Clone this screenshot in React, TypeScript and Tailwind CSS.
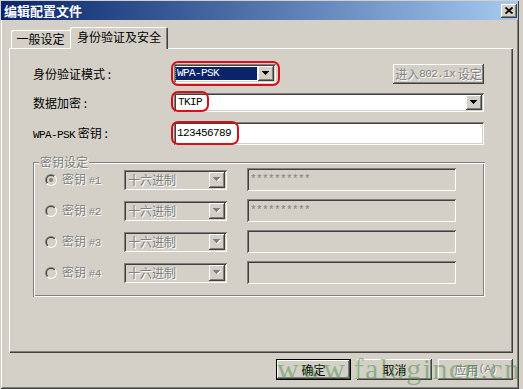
import React from "react";

// classic 3D edges, drawn with inset shadows so they take no layout room
const SUNKEN =
  "shadow-[inset_1px_1px_#808080,inset_-1px_-1px_#ffffff,inset_2px_2px_#404040,inset_-2px_-2px_#d4d0c8]";
const RAISED =
  "shadow-[inset_-1px_-1px_#404040,inset_1px_1px_#ffffff,inset_-2px_-2px_#808080,inset_2px_2px_#d4d0c8]";
const DEFAULT_BTN =
  "shadow-[inset_0_0_0_1px_#000000,inset_-2px_-2px_#404040,inset_2px_2px_#ffffff,inset_-3px_-3px_#808080]";
const DISABLED_TEXT = "text-[#808080] [text-shadow:1px_1px_0_#ffffff]";

// half-width latin, like the dialog's bitmap font
const L = ({ children }: { children: React.ReactNode }) => (
  <span className="font-['Liberation_Mono',monospace] text-[11px] tracking-[-0.6px]">
    {children}
  </span>
);

const Arrow = ({ disabled }: { disabled?: boolean }) => (
  <svg width="8" height="5" viewBox="0 0 8 5" shapeRendering="crispEdges">
    {disabled && (
      <g fill="#ffffff">
        <rect x="1" y="1" width="7" height="1" />
        <rect x="2" y="2" width="5" height="1" />
        <rect x="3" y="3" width="3" height="1" />
        <rect x="4" y="4" width="1" height="1" />
      </g>
    )}
    <g fill={disabled ? "#808080" : "#000000"}>
      <rect x="0" y="0" width="7" height="1" />
      <rect x="1" y="1" width="5" height="1" />
      <rect x="2" y="2" width="3" height="1" />
      <rect x="3" y="3" width="1" height="1" />
    </g>
  </svg>
);

const DropButton = ({ disabled }: { disabled?: boolean }) => (
  <div className={`flex w-[16px] shrink-0 items-center justify-center bg-[#d4d0c8] ${RAISED}`}>
    <Arrow disabled={disabled} />
  </div>
);

const Radio = ({ checked }: { checked?: boolean }) => (
  <svg width="12" height="12" viewBox="0 0 12 12">
    <defs>
      <linearGradient id="ro" x1="0" y1="0" x2="1" y2="1">
        <stop offset="0.5" stopColor="#808080" />
        <stop offset="0.5" stopColor="#ffffff" />
      </linearGradient>
      <linearGradient id="ri" x1="0" y1="0" x2="1" y2="1">
        <stop offset="0.5" stopColor="#404040" />
        <stop offset="0.5" stopColor="#d4d0c8" />
      </linearGradient>
    </defs>
    <circle cx="6" cy="6" r="6" fill="url(#ro)" />
    <circle cx="6" cy="6" r="5" fill="url(#ri)" />
    <circle cx="6" cy="6" r="4" fill="#d4d0c8" />
    {checked && <circle cx="6" cy="6" r="2" fill="#808080" />}
  </svg>
);

const KEY_ROWS = [
  { n: "1", checked: true, value: "**********" },
  { n: "2", checked: false, value: "**********" },
  { n: "3", checked: false, value: "" },
  { n: "4", checked: false, value: "" },
];

export default function App() {
  return (
    <div className="relative h-[389px] w-[523px] overflow-hidden bg-[#d4d0c8] font-['Noto_Sans_CJK_SC',sans-serif] text-[12px] leading-none text-black">
      <div className="flex h-full w-[519px] flex-col shadow-[inset_1px_1px_#d4d0c8,inset_-1px_-1px_#404040,inset_2px_2px_#ffffff,inset_-2px_-2px_#808080]">
        {/* Title bar */}
        <div className="px-[1px] pt-[1px]">
          <div className="flex h-[19px] items-center justify-between bg-linear-to-r from-[#0a246a] to-[#a6caf0] pl-[3px] pr-[1px]">
            <span className="text-[13px] font-bold text-white">编辑配置文件</span>
            <div className={`flex h-[14px] w-[16px] items-center justify-center bg-[#d4d0c8] ${RAISED}`}>
              <svg width="8" height="7" viewBox="0 0 8 7">
                <path d="M0.5 0.5L7.5 6.5M7.5 0.5L0.5 6.5" stroke="#000000" strokeWidth="1.8" />
              </svg>
            </div>
          </div>
        </div>

        <div className="flex flex-col pl-[9px] pt-[7px]">
          {/* Tabs */}
          <div className="flex items-end pl-[2px]">
            <div className="flex h-[18px] w-[59px] items-center justify-center rounded-tl-[2px] shadow-[inset_1px_1px_#ffffff]">
              一般设定
            </div>
            <div className="relative z-10 -mb-[1px] flex h-[22px] w-[98px] items-start justify-center rounded-t-[2px] bg-[#d4d0c8] pt-[4px] shadow-[inset_1px_1px_#ffffff,inset_-1px_0_#404040,inset_-2px_0_#808080]">
              身份验证及安全
            </div>
          </div>

          {/* Tab panel */}
          <div className="flex h-[305px] w-[504px] flex-col pl-[24px] pt-[16px] shadow-[inset_1px_1px_#ffffff,inset_-1px_-1px_#404040,inset_-2px_-2px_#808080]">
            {/* Auth mode */}
            <div className="flex h-[20px] w-[451px] items-start">
              <span className="w-[141px] pt-[4px]">身份验证模式 :</span>
              <div className="relative">
                <div className={`flex h-[19px] w-[102px] bg-white p-[2px] ${SUNKEN}`}>
                  <div className="flex flex-1 items-center py-[1px] pr-[1px]">
                    <div className="flex h-full flex-1 items-center bg-[#0a246a] pl-[1px] text-white outline-1 outline-dotted outline-[#ffffff]/40">
                      <L>WPA-PSK</L>
                    </div>
                  </div>
                  <DropButton />
                </div>
                <div className="absolute -left-[3px] -top-[3px] h-[25px] w-[109px] rounded-[7px] border-2 border-[#d8101a]" />
              </div>
              <div className={`ml-auto flex h-[20px] w-[91px] items-center justify-center whitespace-nowrap ${RAISED} ${DISABLED_TEXT}`}>
                进入<L>802.1x</L>&nbsp;设定
              </div>
            </div>

            {/* Encryption */}
            <div className="mt-[9px] flex h-[19px] w-[451px] items-center">
              <span className="w-[141px]">数据加密 :</span>
              <div className="relative">
                <div className={`flex h-[19px] w-[310px] bg-white p-[2px] ${SUNKEN}`}>
                  <div className="flex flex-1 items-center pl-[2px]">
                    <L>TKIP</L>
                  </div>
                  <DropButton />
                </div>
                <div className="absolute -left-[3px] -top-[2px] h-[21px] w-[38px] rounded-[7px] border-2 border-[#d8101a]" />
              </div>
            </div>

            {/* PSK */}
            <div className="mt-[10px] flex h-[23px] w-[451px] items-center">
              <span className="w-[141px]">
                <L>WPA-PSK</L> 密钥 :
              </span>
              <div className="relative">
                <div className={`flex h-[23px] w-[310px] items-center bg-white pl-[3px] ${SUNKEN}`}>
                  <L>123456789</L>
                </div>
                <div className="absolute -left-[3px] -top-[1px] h-[24px] w-[68px] rounded-[7px] border-2 border-[#d8101a]" />
              </div>
            </div>

            {/* Key settings group */}
            <div className="relative mt-[17px] flex h-[135px] w-[452px] flex-col gap-[8px] pl-[12px] pt-[6px] shadow-[inset_1px_1px_#808080,inset_-1px_-1px_#ffffff,inset_2px_2px_#ffffff,inset_-2px_-2px_#808080]">
              <span className={`absolute -top-[6px] left-[6px] bg-[#d4d0c8] px-[1px] ${DISABLED_TEXT}`}>
                密钥设定
              </span>
              {KEY_ROWS.map((row) => (
                <div key={row.n} className="flex h-[23px] items-center">
                  <Radio checked={row.checked} />
                  <span className={`ml-[5px] w-[62px] ${DISABLED_TEXT}`}>
                    密钥 <L>#{row.n}</L>
                  </span>
                  <div className={`flex h-[20px] w-[103px] bg-[#d4d0c8] p-[2px] ${SUNKEN}`}>
                    <div className={`flex flex-1 items-center pl-[2px] ${DISABLED_TEXT}`}>十六进制</div>
                    <DropButton disabled />
                  </div>
                  <div className={`ml-[20px] flex h-[23px] w-[209px] items-center bg-[#d4d0c8] pl-[3px] text-[#808080] ${SUNKEN}`}>
                    <L>{row.value}</L>
                  </div>
                </div>
              ))}
            </div>
          </div>

          {/* Dialog buttons */}
          <div className="mt-[6px] flex w-[504px] justify-end gap-[6px]">
            <div className={`flex h-[21px] w-[75px] items-center justify-center ${DEFAULT_BTN}`}>确定</div>
            <div className={`flex h-[21px] w-[75px] items-center justify-center ${RAISED}`}>取消</div>
            <div className={`flex h-[21px] w-[75px] items-center justify-center ${RAISED} ${DISABLED_TEXT}`}>
              应用<L>(A)</L>
            </div>
          </div>
        </div>
      </div>

      {/* site watermark */}
      <div className="pointer-events-none absolute left-[277px] top-[354px] whitespace-nowrap font-['Liberation_Serif',serif] text-[30px] leading-none tracking-[1.5px] text-[#4a8f42]/50">
        www.falogincn.cn
      </div>
    </div>
  );
}
